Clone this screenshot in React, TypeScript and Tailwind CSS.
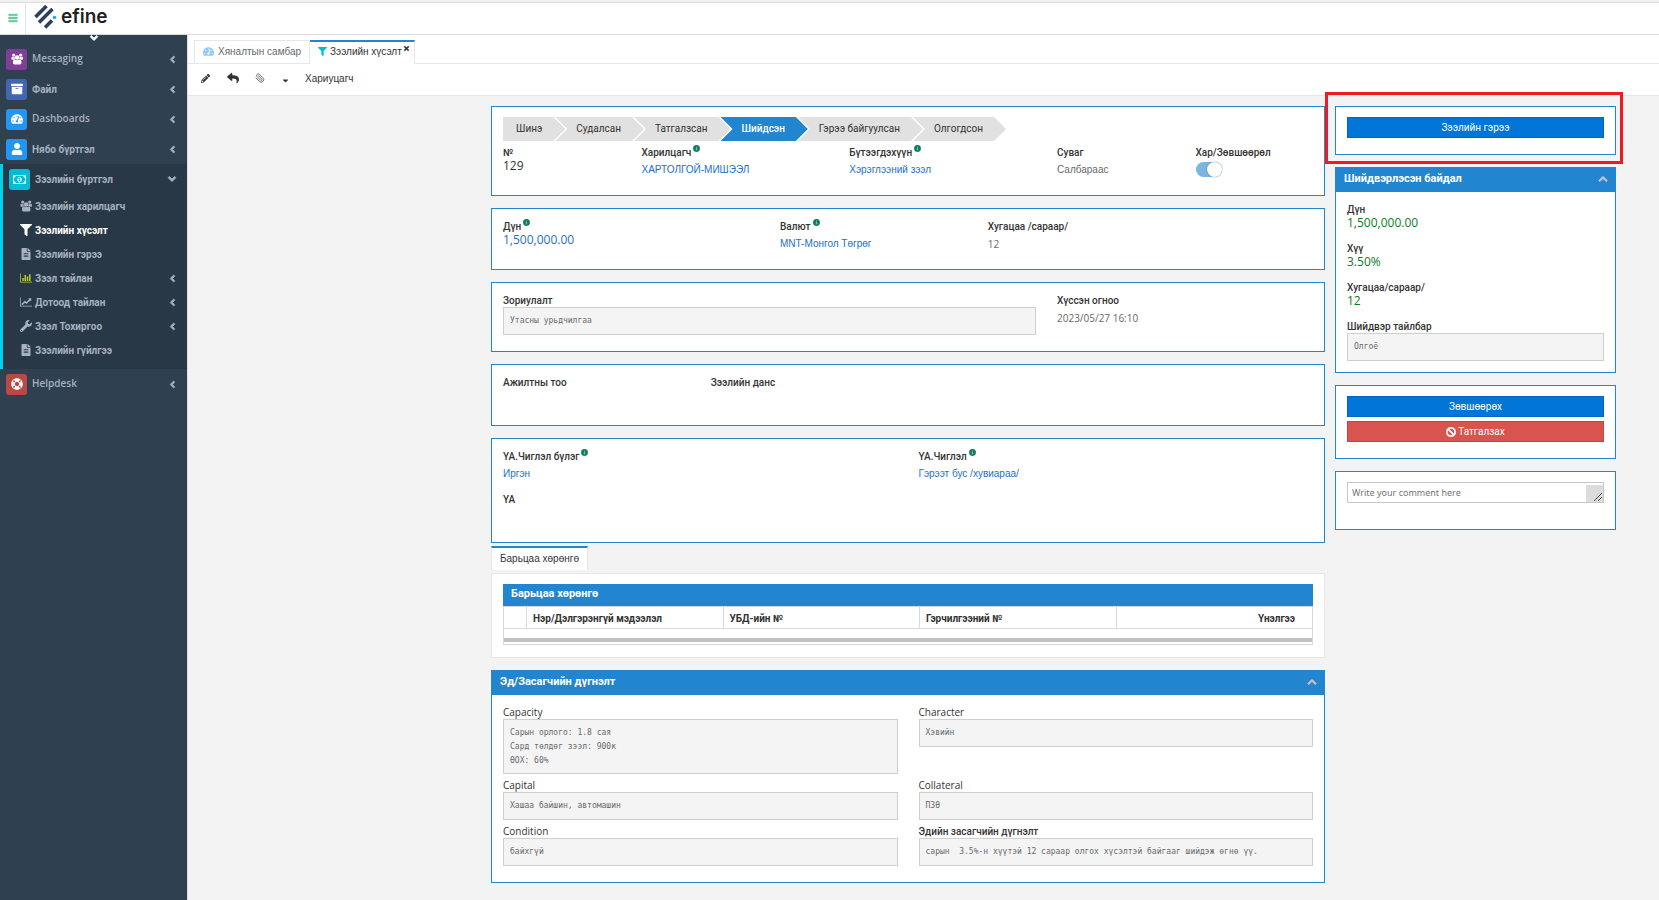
import { useId, useState } from 'react';
import type { ReactNode } from 'react';
import type { IconType } from 'react-icons';
import {
  FaAngleLeft, FaAngleDown, FaArchive, FaBan, FaBars, FaCaretDown,
  FaChevronUp, FaFileAlt, FaFilter, FaLifeRing, FaPencilAlt, FaReply,
  FaTachometerAlt, FaTimes, FaUser, FaWrench, FaInfoCircle,
} from 'react-icons/fa';
import { Paperclip } from 'lucide-react';

// --- Types ---
type IconProps = { size?: number };
type MenuIcon = IconType | ((props: IconProps) => ReactNode);
type MenuEntry = { label: string; icon: MenuIcon; color: string; latin?: boolean };
type SubEntry = { label: string; icon: MenuIcon; iconColor?: string; nested?: boolean; active?: boolean };

// --- Icons (old Font Awesome 4 shapes) ---
function UsersIcon({ size = 13 }: IconProps) {
  return (
    <svg width={size} height={size} viewBox="0 0 1984 1792" fill="currentColor" aria-hidden="true">
      <path d="M657 896q-162 5-265 128h-134q-82 0-138-40.500t-56-118.500q0-353 124-353 6 0 43.500 21t97.500 42.500 119 21.500q67 0 133-23-5 37-5 66 0 139 81 256zm1071 637q0 120-73 189.500t-194 69.500h-874q-121 0-194-69.500t-73-189.500q0-53 3.500-103.500t14-109 26.500-108.500 43-97.500 62-81 85.500-53.500 111.500-20q10 0 43 21.500t73 48 107 48 135 21.500 135-21.500 107-48 73-48 43-21.500q61 0 111.500 20t85.500 53.500 62 81 43 97.500 26.500 108.500 14 109 3.500 103.500zm-1024-1277q0 106-75 181t-181 75-181-75-75-181 75-181 181-75 181 75 75 181zm704 384q0 159-112.500 271.500t-271.500 112.500-271.500-112.500-112.500-271.500 112.500-271.500 271.500-112.500 271.500 112.500 112.500 271.500zm576 225q0 78-56 118.500t-138 40.500h-134q-103-123-265-128 81-117 81-256 0-29-5-66 66 23 133 23 59 0 119-21.500t97.500-42.500 43.500-21q124 0 124 353zm-128-609q0 106-75 181t-181 75-181-75-75-181 75-181 181-75 181 75 75 181z" />
    </svg>
  );
}

function MoneyIcon({ size = 13 }: IconProps) {
  return (
    <svg width={size} height={size} viewBox="0 0 1920 1792" fill="currentColor" aria-hidden="true">
      <path d="M768 1152h384v-96h-128v-448h-114l-148 137 77 80q42-37 55-57h2v288h-128v96zm512-256q0 70-21 142t-59.500 134-101.500 101-138 39-138-39-101.500-101-59.500-134-21-142 21-142 59.500-134 101.500-101 138-39 138 39 101.500 101 59.500 134 21 142zm512 256v-512q-106 0-181-75t-75-181h-1152q0 106-75 181t-181 75v512q106 0 181 75t75 181h1152q0-106 75-181t181-75zm128-832v1152q0 26-19 45t-45 19h-1792q-26 0-45-19t-19-45v-1152q0-26 19-45t45-19h1792q26 0 45 19t19 45z" />
    </svg>
  );
}

function BarChartIcon({ size = 13 }: IconProps) {
  return (
    <svg width={size} height={size} viewBox="0 0 2048 1792" fill="currentColor" aria-hidden="true">
      <path d="M640 896v512h-256v-512h256zm384-512v1024h-256v-1024h256zm1024 1152v128h-2048v-1536h128v1408h1920zm-640-896v768h-256v-768h256zm384-384v1152h-256v-1152h256z" />
    </svg>
  );
}

function LineChartIcon({ size = 13 }: IconProps) {
  return (
    <svg width={size} height={size} viewBox="0 0 2048 1792" fill="currentColor" aria-hidden="true">
      <path d="M2048 1536v128h-2048v-1536h128v1408h1920zm-128-1248v435q0 21-19.500 29.500t-35.500-7.500l-121-121-633 633q-10 10-23 10t-23-10l-233-233-416 416-192-192 585-585q10-10 23-10t23 10l233 233 464-464-121-121q-16-16-7.500-35.500t29.500-19.500h435q14 0 23 9t9 23z" />
    </svg>
  );
}

const topMenu: MenuEntry[] = [
  { label: 'Messaging', icon: UsersIcon, color: 'bg-[#7f3f98]', latin: true },
  { label: 'Файл', icon: FaArchive, color: 'bg-[#4267b2]' },
  { label: 'Dashboards', icon: FaTachometerAlt, color: 'bg-[#2196f3]', latin: true },
  { label: 'Нябо бүртгэл', icon: FaUser, color: 'bg-[#2196f3]' },
];

const loanMenu: SubEntry[] = [
  { label: 'Зээлийн харилцагч', icon: UsersIcon },
  { label: 'Зээлийн хүсэлт', icon: FaFilter, active: true },
  { label: 'Зээлийн гэрээ', icon: FaFileAlt },
  { label: 'Зээл тайлан', icon: BarChartIcon, iconColor: 'text-[#b8cc2c]', nested: true },
  { label: 'Дотоод тайлан', icon: LineChartIcon, nested: true },
  { label: 'Зээл Тохиргоо', icon: FaWrench, nested: true },
  { label: 'Зээлийн гүйлгээ', icon: FaFileAlt },
];

const steps = ['Шинэ', 'Судалсан', 'Татгалзсан', 'Шийдсэн', 'Гэрээ байгуулсан', 'Олгогдсон'];
const currentStep = 3;

function Logo() {
  return (
    <a href="#" className="flex items-center gap-[3px] pb-[3px] pl-2">
      <svg width="24" height="24" viewBox="0 0 24 24" aria-hidden="true">
        <g stroke="#2c3e5d" strokeWidth="3.6" fill="none">
          <path d="M1.500 12 L12.500 1" />
          <path d="M5 17.500 L18.500 4" />
          <path d="M11 22.500 L18 15.500" />
        </g>
        <circle cx="20.500" cy="12.500" r="1.800" fill="#29abe2" />
      </svg>
      <span className="font-['Inter'] text-[19px] leading-6 font-semibold text-[#1f1f24]">efine</span>
    </a>
  );
}

function MenuRow({ label, icon: Icon, color, latin }: MenuEntry) {
  return (
    <a href="#" className="flex h-[30px] items-center pr-[9px] pl-[6px] text-[#a7b1c2]">
      <span className={`flex h-[21px] w-[21px] items-center justify-center rounded-[3px] text-white ${color}`}>
        <Icon size={12} />
      </span>
      <span className={`ml-[5px] flex-1 text-[10px] ${latin ? "pb-[2px] font-['Open_Sans'] font-semibold" : 'font-bold'}`}>{label}</span>
      <FaAngleLeft size={11} className="stroke-current stroke-[30]" />
    </a>
  );
}

function Sidebar() {
  return (
    <aside className="w-[187px] shrink-0 bg-[#2f4050] font-['Roboto','Liberation_Sans',sans-serif]">
      <div className="flex h-[9px] items-start justify-center overflow-hidden text-white">
        <FaAngleDown size={12} className="-mt-[3px] shrink-0 stroke-current stroke-[30]" />
      </div>
      <nav>
        {topMenu.map((item) => <MenuRow key={item.label} {...item} />)}
        <div className="border-l-3 border-[#00d0ea] bg-[#293846] pb-[7px]">
          <a href="#" className="flex h-[30px] items-center pr-[9px] pl-[6px] text-[#a7b1c2]">
            <span className="flex h-[21px] w-[21px] items-center justify-center rounded-[3px] bg-[#00bcd4] text-white">
              <MoneyIcon size={13} />
            </span>
            <span className="ml-[5px] flex-1 text-[10px] font-bold">Зээлийн бүртгэл</span>
            <FaAngleDown size={12} className="stroke-current stroke-[30]" />
          </a>
          {loanMenu.map(({ label, icon: Icon, iconColor, nested, active }) => (
            <a
              key={label}
              href="#"
              className={`flex h-6 items-center pr-[9px] pl-4 text-[10px] font-bold ${active ? 'text-white' : 'text-[#a7b1c2]'}`}
            >
              <span className={`flex w-[13px] justify-center ${iconColor ?? ''}`}><Icon size={12} /></span>
              <span className="ml-[3px] flex-1">{label}</span>
              {nested && <FaAngleLeft size={11} className="stroke-current stroke-[30]" />}
            </a>
          ))}
        </div>
        <MenuRow label="Helpdesk" icon={FaLifeRing} color="bg-[#b94a42]" latin />
      </nav>
    </aside>
  );
}

function Panel({ children, title }: { children: ReactNode; title?: string }) {
  return (
    <section className="border border-[#2185d0] bg-white">
      {title && (
        <header className="flex h-6 items-center justify-between bg-[#2185d0] pr-[7px] pb-[2px] pl-2 text-white">
          <h2 className="text-[11px] leading-4 font-bold">{title}</h2>
          <button type="button" aria-label="Хураах" className="text-[#c4c4c4]"><FaChevronUp size={10} className="stroke-current stroke-[40]" /></button>
        </header>
      )}
      <div className="px-[11px] pt-[10px] pb-4">{children}</div>
    </section>
  );
}

function FieldLabel({ children, info, latin }: { children: ReactNode; info?: boolean; latin?: boolean }) {
  return (
    <span className={`flex h-[14px] text-[10px] font-medium whitespace-nowrap text-[#333] ${latin ? "font-['Open_Sans'] leading-[14px]" : 'leading-4'}`}>
      {children}
      {info && <FaInfoCircle size={7} className="ml-[2px] stroke-current stroke-[30] text-[#0f7b5f]" />}
    </span>
  );
}

type FieldProps = { label: string; span?: string; info?: boolean; children?: ReactNode };

function Field({ label, span = '', info, children }: FieldProps) {
  return (
    <div className={span}>
      <FieldLabel info={info}>{label}</FieldLabel>
      <div className="h-5 leading-[22px] text-[#676a6c]">{children}</div>
    </div>
  );
}

function Amount({ children, color }: { children: ReactNode; color: string }) {
  return <p className={`font-['Open_Sans'] text-[12px] leading-[14px] font-medium ${color}`}>{children}</p>;
}

function RecordLink({ children }: { children: ReactNode }) {
  return <a href="#" className="font-['Liberation_Sans'] text-[10px] whitespace-nowrap text-[#1a6fd4]">{children}</a>;
}

type NoteProps = { label: string; value: string; span?: string; latin?: boolean; tall?: boolean };

function Note({ label, value, span = '', latin, tall }: NoteProps) {
  const id = useId();
  return (
    <div className={span}>
      <label htmlFor={id} className="block"><FieldLabel latin={latin}>{label}</FieldLabel></label>
      <textarea
        id={id}
        readOnly
        value={value}
        className={`block w-full resize-none overflow-hidden border border-[#cfcfcf] bg-[#f4f4f4] px-[6px] py-[6px] font-['DejaVu_Sans_Mono',monospace] text-[8px] leading-[14px] text-[#676a6c] ${tall ? 'h-[55px]' : 'h-7'}`}
      />
    </div>
  );
}

function StepBar() {
  return (
    <ol className="mb-1 flex text-[10px] leading-6 text-[#333]">
      {steps.map((step, i) => {
        const shape = i === 0
          ? 'pl-[13px] [clip-path:polygon(0_0,calc(100%_-_12px)_0,100%_50%,calc(100%_-_12px)_100%,0_100%)]'
          : '-ml-[10px] pl-[21px] [clip-path:polygon(0_0,calc(100%_-_12px)_0,100%_50%,calc(100%_-_12px)_100%,0_100%,12px_50%)]';
        const tone = i === currentStep ? 'bg-[#2185d0] font-medium text-white' : 'bg-[#e1e1e1]';
        return <li key={step} className={`h-6 pr-[23px] whitespace-nowrap ${shape} ${tone}`}>{step}</li>;
      })}
    </ol>
  );
}

function CollateralTable() {
  return (
    <div className="border border-[#e7e7e7] bg-white px-[11px] pt-[10px] pb-3">
      <table className="w-full table-fixed border-collapse text-[#333]">
        <caption className="h-[22px] bg-[#2185d0] pl-2 text-left text-[11px] leading-[19px] font-bold text-white">Барьцаа хөрөнгө</caption>
        <thead>
          <tr className="h-[22px] text-left text-[10px] *:border *:border-[#d9d9d9] *:px-[6px] *:pt-[2px] *:pb-0 *:font-bold">
            <th className="w-[23px]" aria-label="#"></th>
            <th>Нэр/Дэлгэрэнгүй мэдээлэл</th>
            <th>УБД-ийн №</th>
            <th>Гэрчилгээний №</th>
            <th className="text-right"><span className="pr-[11px]">Үнэлгээ</span></th>
          </tr>
        </thead>
      </table>
      <div className="border border-t-0 border-[#d9d9d9] pt-[9px] pb-[2px]">
        <div className="h-1 bg-[#c1c1c1]"></div>
      </div>
    </div>
  );
}

function ActionButton({ children, danger }: { children: ReactNode; danger?: boolean }) {
  return (
    <button
      type="button"
      className={`flex h-[21px] w-full items-center justify-center gap-[2px] border text-[10px] leading-[14px] text-white ${danger ? 'border-[#d43f3a] bg-[#d9534f]' : 'border-[#0067c2] bg-[#0275d8]'}`}
    >
      {children}
    </button>
  );
}

export default function App() {
  const [comment, setComment] = useState('');
  const [consent, setConsent] = useState(true);

  return (
    <div className="flex min-h-screen flex-col bg-[#f3f3f3] font-['Roboto','Liberation_Sans',sans-serif] text-[10px]">
      <header className="mt-[2px] flex h-[33px] border-y border-[#dcdcdc] bg-white">
        <button type="button" aria-label="Цэс" className="flex w-[26px] items-center justify-center border-r border-[#e7e7e7] pb-[2px] text-[#4cc790]">
          <FaBars size={10} className="stroke-current stroke-[30]" />
        </button>
        <Logo />
      </header>

      <div className="flex flex-1">
        <Sidebar />
        <div className="min-w-0 flex-1 border-l border-[#e0e0e0]">
          <div className="flex border-b border-[#e7e7e7] bg-white pt-[5px] pl-[6px] font-['Liberation_Sans']">
            <button type="button" className="flex h-[23px] items-center gap-1 border border-b-0 border-[#e7e7e7] px-2 pb-[2px] text-[#676a6c]">
              <FaTachometerAlt size={11} className="text-[#90caf9]" />
              Хяналтын самбар
            </button>
            <button type="button" className="relative -mb-px flex h-6 items-center gap-[3px] border-t-2 border-r border-t-[#2185d0] border-r-[#e7e7e7] bg-white pr-3 pb-[3px] pl-2 text-[#333]">
              <FaFilter size={9} className="text-[#00bcd4]" />
              Зээлийн хүсэлт
              <FaTimes size={7} className="absolute top-[3px] right-1 stroke-current stroke-[30]" />
            </button>
          </div>

          <div className="flex h-8 items-center border-b border-[#e7e7e7] bg-white pb-[3px] pl-[13px] font-['Liberation_Sans'] text-[#333]">
            <button type="button" aria-label="Засах"><FaPencilAlt size={9} /></button>
            <button type="button" aria-label="Буцах" className="ml-[17px]"><FaReply size={12} /></button>
            <button type="button" aria-label="Хавсралт" className="ml-4 text-[#555]"><Paperclip size={10} className="-scale-x-100" /></button>
            <button type="button" aria-label="Бусад" className="ml-4 pt-1"><FaCaretDown size={9} /></button>
            <button type="button" className="ml-[15px]">Хариуцагч</button>
          </div>

          <main className="flex items-start gap-[10px] pt-[10px] pr-[43px] pl-[303px]">
            <div className="min-w-0 flex-1">
              <div className="flex flex-col gap-3">
                <Panel>
                  <StepBar />
                  <div className="grid grid-cols-12 gap-x-[21px]">
                    <Field label="№" span="col-span-2"><Amount color="text-[#333]">129</Amount></Field>
                    <Field label="Харилцагч" span="col-span-3" info><RecordLink>ХАРТОЛГОЙ-МИШЭЭЛ</RecordLink></Field>
                    <Field label="Бүтээгдэхүүн" span="col-span-3" info><RecordLink>Хэрэглээний зээл</RecordLink></Field>
                    <Field label="Суваг" span="col-span-2"><span className="font-['Liberation_Sans']">Салбараас</span></Field>
                    <Field label="Хар/Зөвшөөрөл" span="col-span-2">
                      <label className="flex h-full items-center">
                        <input
                          type="checkbox"
                          role="switch"
                          aria-label="Хар/Зөвшөөрөл"
                          checked={consent}
                          onChange={(e) => setConsent(e.target.checked)}
                          className="peer sr-only"
                        />
                        <span className="flex h-[15px] w-[26px] rounded-full bg-[#ccc] peer-checked:justify-end peer-checked:bg-[#7ab6e3]">
                          <span className="h-[15px] w-[15px] rounded-full bg-white shadow-[0_0_2px_rgba(0,0,0,0.4)]"></span>
                        </span>
                      </label>
                    </Field>
                  </div>
                </Panel>

                <Panel>
                  <div className="grid grid-cols-12 gap-x-[21px]">
                    <Field label="Дүн" span="col-span-4" info><Amount color="text-[#1a6fd4]">1,500,000.00</Amount></Field>
                    <Field label="Валют" span="col-span-3" info><RecordLink>MNT-Монгол Төгрөг</RecordLink></Field>
                    <Field label="Хугацаа /сараар/" span="col-span-5"><span className="font-['Open_Sans']">12</span></Field>
                  </div>
                </Panel>

                <Panel>
                  <div className="grid grid-cols-12 gap-x-[21px]">
                    <Note label="Зориулалт" value="Утасны урьдчилгаа" span="col-span-8" />
                    <Field label="Хүссэн огноо" span="col-span-4"><span className="font-['Open_Sans']">2023/05/27 16:10</span></Field>
                  </div>
                </Panel>

                <Panel>
                  <div className="grid grid-cols-12 gap-x-[21px]">
                    <Field label="Ажилтны тоо" span="col-span-3" />
                    <Field label="Зээлийн данс" span="col-span-9" />
                  </div>
                </Panel>

                <Panel>
                  <div className="grid grid-cols-12 gap-x-[21px] gap-y-[9px]">
                    <Field label="ҮА.Чиглэл бүлэг" span="col-span-6" info><RecordLink>Иргэн</RecordLink></Field>
                    <Field label="ҮА.Чиглэл" span="col-span-6" info><RecordLink>Гэрээт бус /хувиараа/</RecordLink></Field>
                    <Field label="ҮА" span="col-span-12" />
                  </div>
                </Panel>
              </div>

              <div className="mt-[3px] mb-[3px] flex">
                <button type="button" className="h-6 border-x border-t-2 border-x-[#e7e7e7] border-t-[#2185d0] bg-white px-2 pb-[2px] font-['Liberation_Sans'] text-[#333]">
                  Барьцаа хөрөнгө
                </button>
              </div>
              <CollateralTable />

              <div className="mt-3">
                <Panel title="Эд/Засагчийн дүгнэлт">
                  <div className="grid grid-cols-2 items-start gap-x-[21px] gap-y-1">
                    <Note label="Capacity" latin tall value={'Сарын орлого: 1.8 сая\nСард төлдөг зээл: 900к\nӨОХ: 60%'} />
                    <Note label="Character" latin value="Хэвийн" />
                    <Note label="Capital" latin value="Хашаа байшин, автомашин" />
                    <Note label="Collateral" latin value="ПЗӨ" />
                    <Note label="Condition" latin value="байхгүй" />
                    <Note label="Эдийн засагчийн дүгнэлт" value="сарын  3.5%-н хүүтэй 12 сараар олгох хүсэлтэй байгааг шийдэж өгнө үү." />
                  </div>
                </Panel>
              </div>
            </div>

            <aside className="flex w-[281px] shrink-0 flex-col gap-3">
              <div className="relative">
                <Panel><ActionButton>Зээлийн гэрээ</ActionButton></Panel>
                <div className="pointer-events-none absolute -top-[14px] -right-[7px] -bottom-[9px] -left-[10px] border-3 border-[#ed1c24]"></div>
              </div>

              <Panel title="Шийдвэрлэсэн байдал">
                <div className="-mb-[5px] flex flex-col gap-[5px]">
                  <Field label="Дүн"><Amount color="text-[#0a7d1c]">1,500,000.00</Amount></Field>
                  <Field label="Хүү"><Amount color="text-[#0a7d1c]">3.50%</Amount></Field>
                  <Field label="Хугацаа/сараар/"><Amount color="text-[#0a7d1c]">12</Amount></Field>
                  <Note label="Шийдвэр тайлбар" value="Олгоё" />
                </div>
              </Panel>

              <Panel>
                <div className="flex flex-col gap-1">
                  <ActionButton>Зөвшөөрөх</ActionButton>
                  <ActionButton danger><FaBan size={10} className="stroke-current stroke-[30]" />Татгалзах</ActionButton>
                </div>
              </Panel>

              <Panel>
                <div className="relative mb-[10px]">
                  <textarea
                    aria-label="Write your comment here"
                    placeholder="Write your comment here"
                    value={comment}
                    onChange={(e) => setComment(e.target.value)}
                    className="block h-[21px] w-full resize-none overflow-hidden border border-[#c8c8c8] bg-white px-1 py-[2px] font-['Noto_Sans'] text-[9px] leading-[15px] text-[#333] placeholder:text-[#757575]"
                  />
                  <svg width="17" height="17" viewBox="0 0 17 17" className="absolute right-px bottom-px bg-[#dcdcdc]" aria-hidden="true">
                    <path d="M8 16 L16 8 M12 16 L16 12" stroke="#444" strokeWidth="1" />
                  </svg>
                </div>
              </Panel>
            </aside>
          </main>
        </div>
      </div>
    </div>
  );
}
